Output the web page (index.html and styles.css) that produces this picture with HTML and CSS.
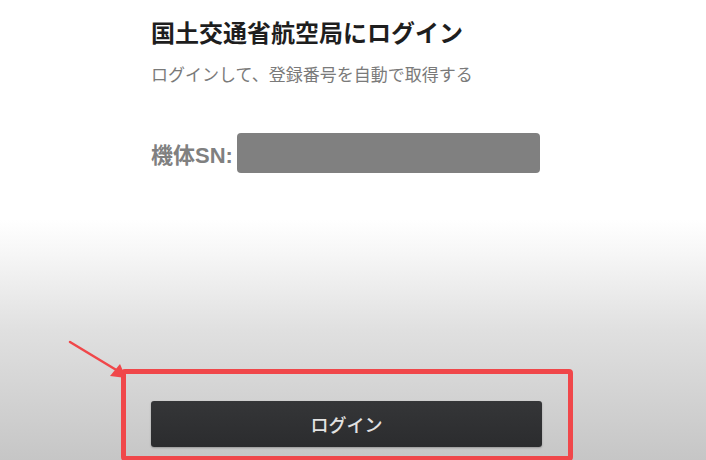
FILE: index.html
```html
<!DOCTYPE html>
<html lang="ja">
<head>
    <meta charset="UTF-8">
    <meta name="viewport" content="width=device-width, initial-scale=1.0">
    <title>ログイン</title>
    <link rel="stylesheet" href="styles.css">
</head>
<body>
    <div class="page">
        <div class="panel">
            <h1 class="title">国土交通省航空局にログイン</h1>
            <p class="subtitle">ログインして、登録番号を自動で取得する</p>
            <div class="sn-row">
                <span class="sn-label">機体SN:</span>
                <div class="sn-value"></div>
            </div>
            <button class="btn-login" type="button">ログイン</button>
        </div>

        <!-- 注釈 -->
        <div class="mark-box"></div>
        <svg class="mark-arrow" width="70" height="45" viewBox="0 0 70 45">
            <path d="M2 2 L50 31" stroke="#f0474a" stroke-width="2.5" fill="none" stroke-linecap="round"/>
            <path d="M42 36 L58 38 L52 24 Z" fill="#f0474a"/>
        </svg>
    </div>
</body>
</html>
```

FILE: styles.css
```css
body {
    margin: 0;
    padding: 0;
    font-family: "Noto Sans CJK JP", "Noto Sans", sans-serif;
}
.page {
    position: relative;
    width: 706px;
    height: 460px;
    overflow: hidden;
    background: linear-gradient(to bottom, #fff 0, #fff 220px, #f6f6f6 255px, #e0e0e0 330px, #c6c6c6 460px);
}
.panel {
    padding: 16px 0 0 151px;
}
.title {
    margin: 0;
    font-size: 24px;
    line-height: 32px;
    font-weight: 700;
    color: #1e1e1e;
}
.subtitle {
    margin: 14px 0 0;
    font-size: 17px;
    line-height: 24px;
    color: #7a7a7a;
}
.sn-row {
    display: flex;
    align-items: center;
    margin-top: 47px;
    height: 40px;
}
.sn-label {
    font-family: "Liberation Sans", "Noto Sans CJK JP", sans-serif;
    font-size: 22px;
    font-weight: 700;
    color: #808080;
    width: 86px;
}
.sn-value {
    width: 303px;
    height: 40px;
    background: #808080;
    border-radius: 4px;
}
.btn-login {
    display: block;
    margin-top: 228px;
    width: 391px;
    height: 46px;
    border: none;
    border-radius: 3px;
    background: linear-gradient(to bottom, #353638, #2b2c2e);
    color: #e2e2e2;
    font-family: "Noto Sans CJK JP", sans-serif;
    font-size: 18px;
    font-weight: 500;
    box-shadow: 0 1px 2px rgba(0, 0, 0, 0.25);
}
.mark-box {
    position: absolute;
    left: 121px;
    top: 369px;
    width: 442px;
    height: 82px;
    border: 5px solid #f0474a;
    border-radius: 4px;
}
.mark-arrow {
    position: absolute;
    left: 68px;
    top: 340px;
}
```
